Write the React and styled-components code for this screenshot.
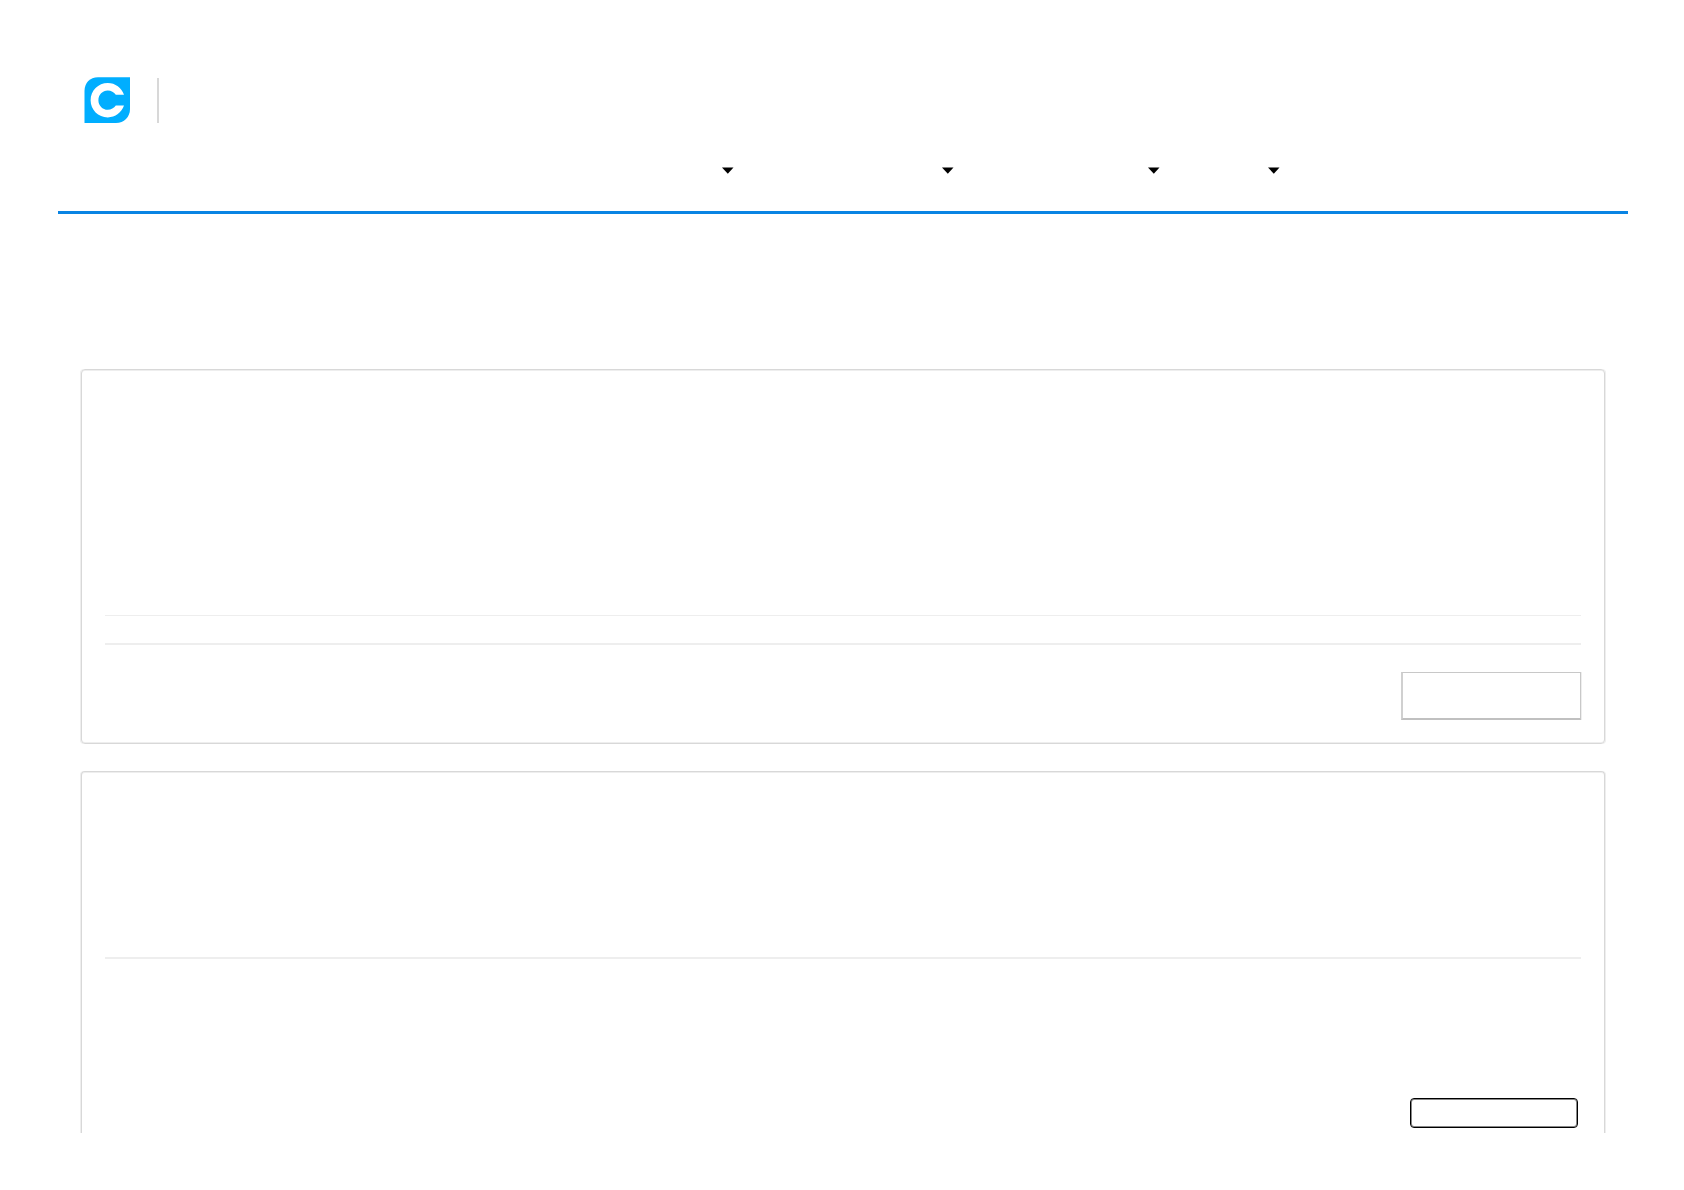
import styled, { createGlobalStyle } from "styled-components";

const menus = [
    { label: 'Menu 1', width: 160 },
    { label: 'Menu 2', width: 220 },
    { label: 'Menu 3', width: 206 },
    { label: 'Menu 4', width: 120 },
]

function Logo(){
    return (
        <LogoSvg viewBox="0 0 46 46" aria-hidden="true">
            <path d="M14 0.3H46V32C46 40 40 46 32 46H0.5V14C0.5 6 6 0.3 14 0.3Z" fill="#00aeff" />
            <path d="M40 17.8C37.6 10.8 31.3 6 23.8 6C14.2 6 6.6 13.7 6.6 23.2C6.6 32.7 14.2 40.4 23.8 40.4C31.3 40.4 37.6 35.6 40 28.6H31.8C30 31.2 27.1 32.8 23.8 32.8C18.5 32.8 14.4 28.5 14.4 23.2C14.4 17.9 18.5 13.6 23.8 13.6C27.1 13.6 30 15.2 31.8 17.8Z" fill="#fff" />
        </LogoSvg>
    )
}

function App(){
    return (
        <>
            <GlobalStyle />
            <Page>
                <Header>
                    <Brand>
                        <HomeLink href="#" aria-label="Home">
                            <Logo />
                        </HomeLink>
                        <BrandDivider />
                    </Brand>
                    <Nav>
                        {menus.map(menu => (
                            <MenuButton key={menu.label} type="button" aria-label={menu.label} $width={menu.width}>
                                <Caret viewBox="0 0 12 7" aria-hidden="true">
                                    <path d="M0 0.5H11.5L5.8 6.7Z" />
                                </Caret>
                            </MenuButton>
                        ))}
                    </Nav>
                </Header>
                <Main>
                    <Card>
                        <Section $height={245} />
                        <Divider $size={1} />
                        <Section $height={27} />
                        <Divider $size={2} />
                        <Actions>
                            <ActionButton type="button" aria-label="Action" />
                        </Actions>
                    </Card>
                    <Card $open>
                        <Section $height={185} />
                        <Divider $size={2} />
                        <Section $height={139} />
                        <Filters>
                            <FilterInput type="text" aria-label="Filter" />
                        </Filters>
                    </Card>
                </Main>
            </Page>
        </>
    )
}

export default App;


const GlobalStyle = createGlobalStyle`
    * {
        box-sizing: border-box;
    }
    body {
        margin: 0;
        background-color: #fff;
        font-family: "Liberation Sans", Arial, sans-serif;
    }
`
const Page = styled.div`
    padding: 56px 56px 56px 58px;
`
const Header = styled.header`
    border-bottom: 3px solid #0984e3;
    padding: 21px 26px 0;
`
const Brand = styled.div`
    display: flex;
    align-items: center;
    gap: 27px;
`
const HomeLink = styled.a`
    display: block;
    line-height: 0;
`
const LogoSvg = styled.svg`
    width: 46px;
    height: 46px;
`
const BrandDivider = styled.span`
    width: 2px;
    height: 45px;
    background-color: #d8d8d8;
`
const Nav = styled.nav`
    display: flex;
    justify-content: flex-end;
    padding: 24px 322px 17px 0;
`
const MenuButton = styled.button`
    display: flex;
    align-items: center;
    justify-content: flex-end;
    width: ${props => props.$width}px;
    height: 47px;
    padding: 0;
    border: none;
    background: none;
    cursor: pointer;
`
const Caret = styled.svg`
    width: 12px;
    height: 7px;
    fill: #000;
`
const Main = styled.main`
    display: flex;
    flex-direction: column;
    gap: 27px;
    padding: 155px 23px 0;
`
const Card = styled.section`
    border: 1px solid #d8d8d8;
    border-bottom-width: ${props => props.$open ? '0' : '1px'};
    border-radius: ${props => props.$open ? '4px 4px 0 0' : '4px'};
    padding: ${props => props.$open ? '0 23px 5px' : '0 23px 23px'};
    box-shadow: 1px 0 0 #eee, -1px 0 0 #eee, inset 0 1px 0 #eee${props => props.$open ? '' : ', inset 0 -1px 0 #eee'};
`
const Section = styled.div`
    height: ${props => props.$height}px;
`
const Divider = styled.hr`
    height: ${props => props.$size}px;
    margin: 0;
    border: none;
    background-color: #eee;
`
const Actions = styled.div`
    display: flex;
    justify-content: flex-end;
    padding-top: 27px;
`
const ActionButton = styled.button`
    width: 180px;
    height: 48px;
    border: 1px solid #c8c8c8;
    border-left: 2px solid #d0d0d0;
    border-bottom: 2px solid #c0c0c0;
    background-color: #fff;
    box-shadow: 1px 0 0 #eee;
    cursor: pointer;
`
const Filters = styled.div`
    display: flex;
    justify-content: flex-end;
    padding-right: 3px;
`
const FilterInput = styled.input`
    width: 168px;
    height: 30px;
    border: 1px solid #000;
    border-radius: 4px;
    background-color: #fff;
    box-shadow: inset 0 0 0 1px #888;
`
